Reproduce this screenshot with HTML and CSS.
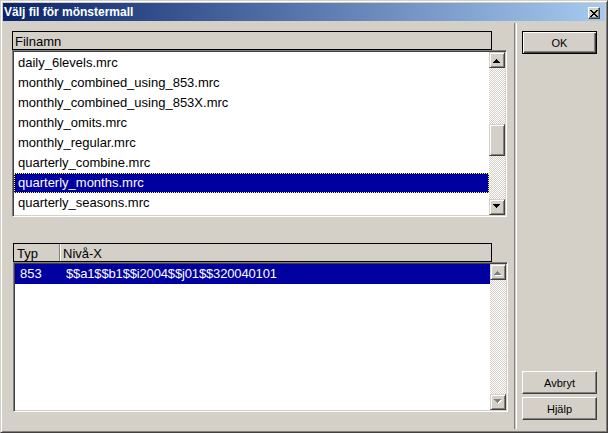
FILE: index.html
```html
<!DOCTYPE html>
<html lang="sv">
<head>
<meta charset="utf-8">
<title>Välj fil för mönstermall</title>
<link rel="stylesheet" href="styles.css">
</head>
<body>
<div class="window">
  <div class="titlebar">
    <span class="title">Välj fil för mönstermall</span>
    <div class="close">
      <svg width="8" height="7" viewBox="0 0 8 7" shape-rendering="crispEdges"><path d="M0 0h2v1h-2zM6 0h2v1h-2zM1 1h2v1h-2zM5 1h2v1h-2zM2 2h4v1h-4zM3 3h2v1h-2zM2 4h4v1h-4zM1 5h2v1h-2zM5 5h2v1h-2zM0 6h2v1h-2zM6 6h2v1h-2z" fill="#000"/></svg>
    </div>
  </div>
  <div class="content">
    <div class="left">
      <div class="listview">
        <div class="lv-header top-header"><div class="hcell wide">Filnamn</div></div>
        <div class="listbox files">
          <div class="items pad-top">
            <div class="row">daily_6levels.mrc</div>
            <div class="row">monthly_combined_using_853.mrc</div>
            <div class="row">monthly_combined_using_853X.mrc</div>
            <div class="row">monthly_omits.mrc</div>
            <div class="row">monthly_regular.mrc</div>
            <div class="row">quarterly_combine.mrc</div>
            <div class="row selected focused">quarterly_months.mrc</div>
            <div class="row">quarterly_seasons.mrc</div>
          </div>
          <div class="vscroll">
            <div class="sb-btn up"><svg width="7" height="4" viewBox="0 0 7 4" shape-rendering="crispEdges"><path d="M3 0h1v1h-1zM2 1h3v1h-3zM1 2h5v1h-5zM0 3h7v1h-7z" fill="#000"/></svg></div>
            <div class="track track-before"></div>
            <div class="thumb"></div>
            <div class="track grow"></div>
            <div class="sb-btn down"><svg width="7" height="4" viewBox="0 0 7 4" shape-rendering="crispEdges"><path d="M0 0h7v1h-7zM1 1h5v1h-5zM2 2h3v1h-3zM3 3h1v1h-1z" fill="#000"/></svg></div>
          </div>
        </div>
      </div>
      <div class="listview second">
        <div class="lv-header bottom-header">
          <div class="hcell typ">Typ</div>
          <div class="hcell wide niva">Nivå-X</div>
        </div>
        <div class="listbox fields">
          <div class="items">
            <div class="row selected"><span class="c1">853</span><span class="c2">$$a1$$b1$$i2004$$j01$$320040101</span></div>
          </div>
          <div class="vscroll">
            <div class="sb-btn up"><svg width="8" height="5" viewBox="0 0 8 5" shape-rendering="crispEdges"><path d="M4 1h1v1h-1zM3 2h3v1h-3zM2 3h5v1h-5zM1 4h7v1h-7z" fill="#fff"/><path d="M3 0h1v1h-1zM2 1h3v1h-3zM1 2h5v1h-5zM0 3h7v1h-7z" fill="#808080"/></svg></div>
            <div class="track grow"></div>
            <div class="sb-btn down"><svg width="8" height="5" viewBox="0 0 8 5" shape-rendering="crispEdges"><path d="M1 1h7v1h-7zM2 2h5v1h-5zM3 3h3v1h-3zM4 4h1v1h-1z" fill="#fff"/><path d="M0 0h7v1h-7zM1 1h5v1h-5zM2 2h3v1h-3zM3 3h1v1h-1z" fill="#808080"/></svg></div>
          </div>
        </div>
      </div>
    </div>
    <div class="separator"></div>
    <div class="right">
      <button class="btn default" type="button">OK</button>
      <div class="btn-group">
        <button class="btn" type="button">Avbryt</button>
        <button class="btn" type="button">Hjälp</button>
      </div>
    </div>
  </div>
</div>
</body>
</html>
```
FILE: styles.css
```css
* { box-sizing: border-box; }
html, body { margin: 0; padding: 0; }
body {
  width: 608px;
  height: 433px;
  overflow: hidden;
  background: #d4d0c8;
  font-family: "Liberation Sans", Arial, sans-serif;
  color: #000;
}
.window {
  width: 608px;
  height: 433px;
  display: flex;
  flex-direction: column;
  background: #d4d0c8;
  border: 1px solid;
  border-color: #d4d0c8 #404040 #404040 #d4d0c8;
  box-shadow: inset 1px 1px #fff, inset -1px -1px #808080;
  padding: 2px;
}
.titlebar {
  height: 18px;
  flex: none;
  display: flex;
  align-items: flex-start;
  background: linear-gradient(to right, #0a246a, #a6caf0);
  padding-left: 1px;
}
.title {
  flex: 1;
  color: #fff;
  font-weight: bold;
  font-size: 12px;
  line-height: 18px;
  white-space: nowrap;
}
.close {
  width: 12px;
  height: 12px;
  margin: 4px 5px 0 0;
  background: #d4d0c8;
  border: 1px solid;
  border-color: #fff #404040 #404040 #fff;
  box-shadow: inset -1px -1px #808080;
  display: flex;
  padding: 2px 0 0 1px;
}
.close svg { display: block; }
.content {
  flex: 1;
  display: flex;
  min-height: 0;
}
.left {
  width: 511px;
  flex: none;
  padding: 10px 0 0 9px;
}
.listview { display: flex; flex-direction: column; }
.listview.second { margin: 26px 0 0 1px; }
.lv-header {
  display: flex;
  height: 19px;
  border: 1px solid #000;
  background: #d4d0c8;
  font-size: 13px;
}
.top-header { width: 480px; }
.bottom-header { width: 479px; }
.hcell {
  padding: 2px 0 0 2px;
  line-height: 15px;
  white-space: nowrap;
}
.hcell.wide { flex: 1; }
.hcell.typ { width: 46px; border-right: 1px solid #808080; padding-left: 3px; }
.hcell.niva { border-left: 1px solid #fff; padding-left: 2px; }
.listbox {
  width: 495px;
  display: flex;
  background: #fff;
  border: 1px solid;
  border-color: #808080 #fff #fff #808080;
  box-shadow: inset 1px 1px #404040, inset -1px -1px #d4d0c8;
  padding: 1px;
}
.listbox.files { height: 167px; }
.listbox.fields { height: 150px; }
.items {
  flex: 1;
  font-size: 13px;
  overflow: hidden;
}
.items.pad-top { padding-top: 1px; }
.row {
  height: 20px;
  line-height: 18px;
  border: 1px solid transparent;
  padding-left: 3px;
  white-space: nowrap;
}
.row.selected { background: #0000a0; color: #fff; }
.row.focused { border: 1px dotted #ffff00; }
.c1 { display: inline-block; width: 46px; padding-left: 1px; }
.c2 { display: inline-block; padding-left: 1px; letter-spacing: -0.15px; }
.vscroll {
  width: 16px;
  flex: none;
  display: flex;
  flex-direction: column;
}
.sb-btn, .thumb {
  background: #d4d0c8;
  border: 1px solid;
  border-color: #d4d0c8 #404040 #404040 #d4d0c8;
  box-shadow: inset 1px 1px #fff, inset -1px -1px #808080;
}
.sb-btn { height: 16px; flex: none; }
.sb-btn svg { display: block; margin-left: 3px; }
.sb-btn.up svg { margin-top: 6px; }
.sb-btn.down svg { margin-top: 4px; }
.thumb { height: 32px; flex: none; }
.track {
  background: repeating-conic-gradient(#fff 0 25%, #d4d0c8 0 50%) 0 0 / 2px 2px;
}
.track-before { height: 56px; flex: none; }
.track.grow { flex: 1; }
.separator {
  width: 3px;
  flex: none;
  margin: 2px 0 1px;
  border-left: 1px solid #808080;
  border-right: 1px solid #fff;
}
.right {
  flex: 1;
  display: flex;
  flex-direction: column;
  padding: 10px 0 10px 5px;
}
.btn-group {
  margin-top: auto;
  display: flex;
  flex-direction: column;
  gap: 3px;
}
.btn {
  appearance: none;
  width: 75px;
  height: 23px;
  margin: 0;
  padding: 0;
  background: #d4d0c8;
  border: 1px solid;
  border-color: #fff #404040 #404040 #fff;
  box-shadow: inset -1px -1px #808080;
  font-family: "Liberation Sans", Arial, sans-serif;
  font-size: 11px;
  color: #000;
  display: flex;
  align-items: center;
  justify-content: center;
}
.btn.default {
  border-color: #000;
  box-shadow: inset 1px 1px #fff, inset -1px -1px #404040, inset -2px -2px #808080;
}
```
